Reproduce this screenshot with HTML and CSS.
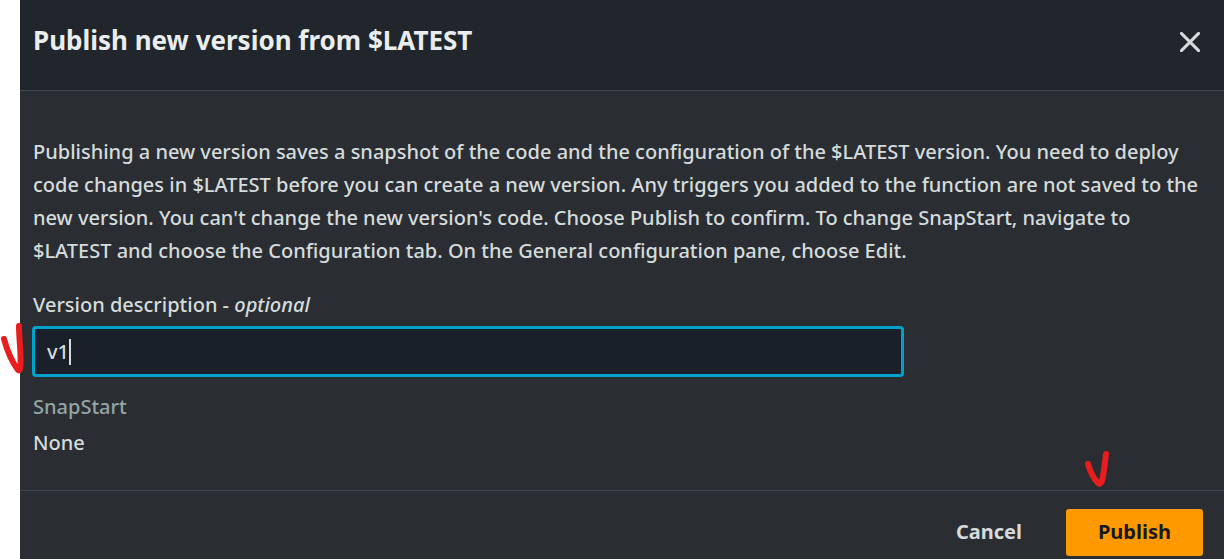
FILE: index.html
```html
<!DOCTYPE html>
<html lang="en">
<head>
<meta charset="utf-8">
<meta name="viewport" content="width=device-width, initial-scale=1">
<title>Publish new version from $LATEST</title>
<link rel="stylesheet" href="styles.css">
</head>
<body class="page">
<form class="modal" role="dialog" aria-labelledby="modal-title">
  <header class="modal-header">
    <h1 class="modal-title" id="modal-title">Publish new version from $LATEST</h1>
    <button class="close" type="button" aria-label="Close">
      <svg class="close-icon" viewBox="0 0 20 20" aria-hidden="true"><path d="M1.4 1.4 18.6 18.6M18.6 1.4 1.4 18.6"/></svg>
    </button>
  </header>
  <div class="modal-body">
    <p class="intro">Publishing a new version saves a snapshot of the code and the configuration of the $LATEST version. You need to deploy code changes in $LATEST before you can create a new version. Any triggers you added to the function are not saved to the new version. You can't change the new version's code. Choose Publish to confirm. To change SnapStart, navigate to $LATEST and choose the Configuration tab. On the General configuration pane, choose Edit.</p>
    <div class="field">
      <label class="label" for="description">Version description - <em>optional</em></label>
      <div class="input-wrap">
        <input class="input" id="description" type="text" value="v1">
        <span class="caret"></span>
        <svg class="mark mark-input" viewBox="0 0 26 54" aria-hidden="true"><path d="M4 17C7 28 12 40 18 48Q19 49 20 47C22 38 19 18 19 4"/></svg>
      </div>
    </div>
    <dl class="details">
      <dt class="details-term">SnapStart</dt>
      <dd class="details-value">None</dd>
    </dl>
  </div>
  <footer class="modal-footer">
    <button class="button" type="button">Cancel</button>
    <div class="publish-wrap">
      <button class="button button-primary" type="submit">Publish</button>
      <svg class="mark mark-publish" viewBox="0 0 26 38" aria-hidden="true"><path d="M4 14C6 21 10 29 14 33Q16 35 18 31C20 23 21 11 22 4"/></svg>
    </div>
  </footer>
</form>
</body>
</html>
```
FILE: styles.css
```css
* {
  box-sizing: border-box;
}

.page {
  margin: 0;
  padding-left: 20px;
  background: #fff;
  color: #d5dbdb;
  font: 500 20px/33px "Noto Sans", "Open Sans", sans-serif;
}

.modal {
  display: flex;
  flex-direction: column;
  min-height: 100vh;
  background: #2a2e33;
}

.modal-header {
  display: flex;
  justify-content: space-between;
  align-items: flex-start;
  padding: 24px 24px 33px 13px;
  border-bottom: 1px solid #414750;
  background: #21252c;
}

.modal-title {
  margin: 0;
  color: #eaeded;
  font-size: 26px;
  font-weight: 700;
  line-height: 33px;
}

.close {
  display: flex;
  margin-top: 8px;
  padding: 0;
  border: 0;
  background: none;
  color: #d5dbdb;
}

.close-icon {
  width: 20px;
  height: 20px;
  fill: none;
  stroke: currentColor;
  stroke-width: 3;
  stroke-linecap: round;
}

.modal-body {
  flex: 1;
  padding: 44px 13px 30px;
}

.intro {
  margin: 0 0 21px;
}

.label {
  display: block;
  margin-bottom: 5px;
}

.input-wrap {
  position: relative;
  width: 74%;
  margin-left: -1px;
}

.input {
  display: block;
  width: 100%;
  height: 51px;
  padding: 0 12px;
  border: 3px solid #00a1c9;
  border-radius: 4px;
  outline: 0;
  background: #1a202a;
  color: #d5dbdb;
  font: inherit;
}

.caret {
  position: absolute;
  top: 13px;
  left: 37px;
  width: 2px;
  height: 26px;
  background: #d5dbdb;
}

.mark {
  position: absolute;
  fill: none;
  stroke: #e81d1d;
  stroke-width: 6;
  stroke-linecap: round;
  stroke-linejoin: round;
}

.mark-input {
  top: -4px;
  left: -32px;
  width: 26px;
  height: 54px;
}

.details {
  margin: 13px 0 0;
}

.details-term {
  color: #95a5a6;
}

.details-value {
  margin: 3px 0 0;
}

.modal-footer {
  display: flex;
  justify-content: flex-end;
  gap: 12px;
  padding: 18px 21px 3px;
  border-top: 1px solid #414750;
}

.publish-wrap {
  position: relative;
}

.button {
  height: 47px;
  padding: 0 32px 2px;
  border: 0;
  border-radius: 3px;
  background: none;
  color: #d5dbdb;
  font: 700 20px/33px "Noto Sans", "Open Sans", sans-serif;
}

.button-primary {
  background: #ff9900;
  color: #16191f;
}

.mark-publish {
  top: -59px;
  left: 18px;
  width: 26px;
  height: 38px;
}
```
